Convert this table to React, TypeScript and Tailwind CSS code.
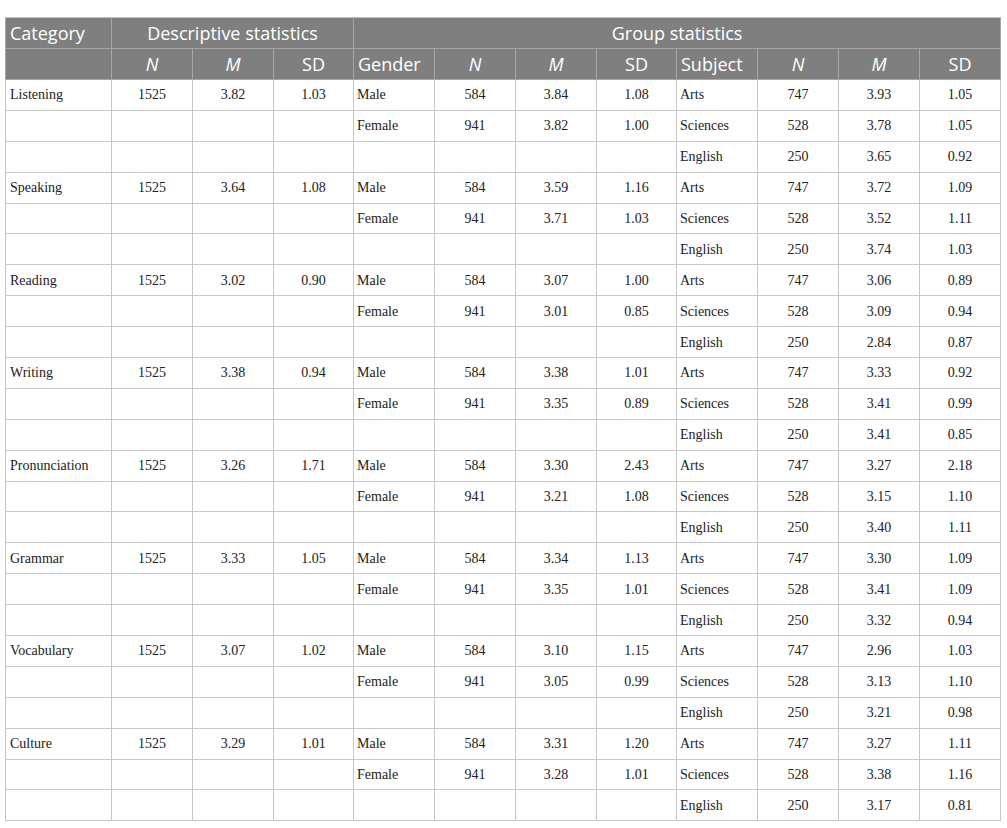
import React from "react";

type Row = { cat: string; n: string; m: string; sd: string; g: string; gn: string; gm: string; gsd: string; s: string; sn: string; sm: string; ssd: string };

const cats: [string, string, string, string, string[][], string[][]][] = [
  ["Listening", "1525", "3.82", "1.03", [["Male", "584", "3.84", "1.08"], ["Female", "941", "3.82", "1.00"]], [["Arts", "747", "3.93", "1.05"], ["Sciences", "528", "3.78", "1.05"], ["English", "250", "3.65", "0.92"]]],
  ["Speaking", "1525", "3.64", "1.08", [["Male", "584", "3.59", "1.16"], ["Female", "941", "3.71", "1.03"]], [["Arts", "747", "3.72", "1.09"], ["Sciences", "528", "3.52", "1.11"], ["English", "250", "3.74", "1.03"]]],
  ["Reading", "1525", "3.02", "0.90", [["Male", "584", "3.07", "1.00"], ["Female", "941", "3.01", "0.85"]], [["Arts", "747", "3.06", "0.89"], ["Sciences", "528", "3.09", "0.94"], ["English", "250", "2.84", "0.87"]]],
  ["Writing", "1525", "3.38", "0.94", [["Male", "584", "3.38", "1.01"], ["Female", "941", "3.35", "0.89"]], [["Arts", "747", "3.33", "0.92"], ["Sciences", "528", "3.41", "0.99"], ["English", "250", "3.41", "0.85"]]],
  ["Pronunciation", "1525", "3.26", "1.71", [["Male", "584", "3.30", "2.43"], ["Female", "941", "3.21", "1.08"]], [["Arts", "747", "3.27", "2.18"], ["Sciences", "528", "3.15", "1.10"], ["English", "250", "3.40", "1.11"]]],
  ["Grammar", "1525", "3.33", "1.05", [["Male", "584", "3.34", "1.13"], ["Female", "941", "3.35", "1.01"]], [["Arts", "747", "3.30", "1.09"], ["Sciences", "528", "3.41", "1.09"], ["English", "250", "3.32", "0.94"]]],
  ["Vocabulary", "1525", "3.07", "1.02", [["Male", "584", "3.10", "1.15"], ["Female", "941", "3.05", "0.99"]], [["Arts", "747", "2.96", "1.03"], ["Sciences", "528", "3.13", "1.10"], ["English", "250", "3.21", "0.98"]]],
  ["Culture", "1525", "3.29", "1.01", [["Male", "584", "3.31", "1.20"], ["Female", "941", "3.28", "1.01"]], [["Arts", "747", "3.27", "1.11"], ["Sciences", "528", "3.38", "1.16"], ["English", "250", "3.17", "0.81"]]],
];

const rows: Row[] = [];
for (const [cat, n, m, sd, g, s] of cats) {
  for (let i = 0; i < 3; i++) {
    const gg = g[i] || ["", "", "", ""];
    const ss = s[i];
    rows.push({
      cat: i === 0 ? cat : "", n: i === 0 ? n : "", m: i === 0 ? m : "", sd: i === 0 ? sd : "",
      g: gg[0], gn: gg[1], gm: gg[2], gsd: gg[3],
      s: ss[0], sn: ss[1], sm: ss[2], ssd: ss[3],
    });
  }
}

const widths = [106, 81, 81, 80, 81, 81, 81, 80, 81, 81, 81, 81];

const th = "border border-[#a6a6a6] h-[31px] px-[4px] font-normal text-white text-[18px] leading-none align-middle";
const td = "border border-[#c8c8c8] h-[30.9px] px-[3px] text-[14px] text-[#222] align-middle";

export default function App() {
  return (
    <div className="w-[1007px] h-[828px] bg-white pt-[17px] pl-[5px]">
      <table className="border-collapse table-fixed w-[995px]">
        <colgroup>
          {widths.map((w, i) => (
            <col key={i} style={{ width: w }} />
          ))}
        </colgroup>
        <thead className="bg-[#7f7f7f] font-['Open_Sans',sans-serif]">
          <tr>
            <th className={`${th} text-left border-t-[#c0c0c0]`}>Category</th>
            <th className={`${th} text-center border-t-[#c0c0c0]`} colSpan={3}>Descriptive statistics</th>
            <th className={`${th} text-center border-t-[#c0c0c0]`} colSpan={8}>Group statistics</th>
          </tr>
          <tr>
            <th className={th}></th>
            <th className={`${th} text-center italic`}>N</th>
            <th className={`${th} text-center italic`}>M</th>
            <th className={`${th} text-center`}>SD</th>
            <th className={`${th} text-left`}>Gender</th>
            <th className={`${th} text-center italic`}>N</th>
            <th className={`${th} text-center italic`}>M</th>
            <th className={`${th} text-center`}>SD</th>
            <th className={`${th} text-left`}>Subject</th>
            <th className={`${th} text-center italic`}>N</th>
            <th className={`${th} text-center italic`}>M</th>
            <th className={`${th} text-center`}>SD</th>
          </tr>
        </thead>
        <tbody className="font-['Liberation_Serif',serif]">
          {rows.map((r, i) => (
            <tr key={i}>
              <td className={`${td} text-left pl-[4px]`}>{r.cat}</td>
              <td className={`${td} text-center`}>{r.n}</td>
              <td className={`${td} text-center`}>{r.m}</td>
              <td className={`${td} text-center`}>{r.sd}</td>
              <td className={`${td} text-left`}>{r.g}</td>
              <td className={`${td} text-center`}>{r.gn}</td>
              <td className={`${td} text-center`}>{r.gm}</td>
              <td className={`${td} text-center`}>{r.gsd}</td>
              <td className={`${td} text-left`}>{r.s}</td>
              <td className={`${td} text-center`}>{r.sn}</td>
              <td className={`${td} text-center`}>{r.sm}</td>
              <td className={`${td} text-center`}>{r.ssd}</td>
            </tr>
          ))}
        </tbody>
      </table>
    </div>
  );
}
